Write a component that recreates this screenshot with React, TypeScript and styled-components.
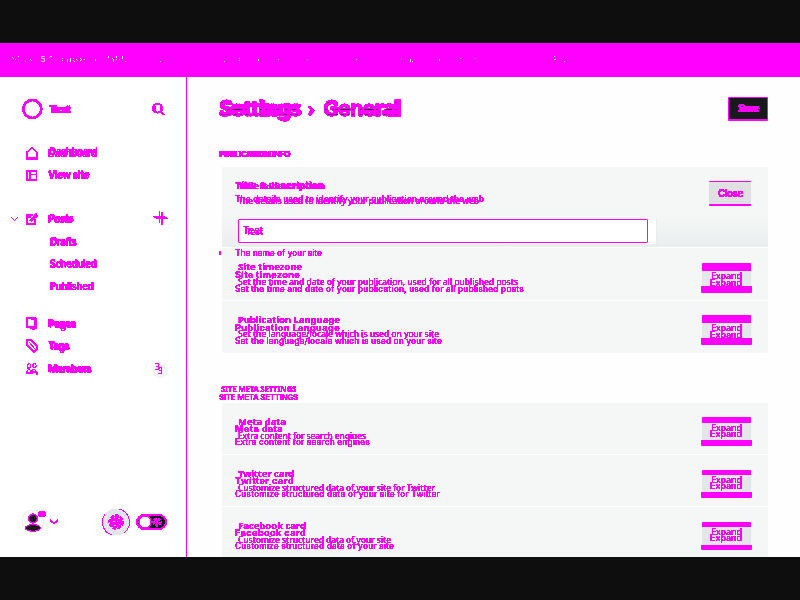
import React, { useLayoutEffect, useRef, useState } from "react";
import styled, { createGlobalStyle } from "styled-components";

const M = "#ff00ff";

const Global = createGlobalStyle`
  * { box-sizing: border-box; }
  body { margin: 0; background: #0e0e0e; font-family: "Noto Sans", sans-serif; }
`;
const Screen = styled.div`
  width: 800px; height: 600px; padding: 43px 0; overflow: hidden; background: #0e0e0e;
  display: flex; flex-direction: column;
`;
const Banner = styled.header`
  flex: 0 0 34px; background: ${M}; svg { display: block; }
`;
const Body = styled.div`
  height: 480px; display: flex; background: #fefefe; overflow: hidden;
`;
const Sidebar = styled.aside`
  width: 187px; flex: none; border-right: 1px solid ${M}; background: #fff;
  display: flex; flex-direction: column; padding-top: 20px;
`;
const Main = styled.main`
  flex: 1; padding: 0 32px 0 32px; display: flex; flex-direction: column;
`;
const Layers = styled.div<{ $w?: number; $h?: number }>`
  display: grid; grid-template-columns: ${(p) => p.$w ?? 290}px; align-items: start;
  height: ${(p) => p.$h ?? 10}px; filter: url(#crisp); flex: none;
`;
const Ink = styled.span<{ $x: number; $y: number; $size: number; $weight: number; $inter?: boolean }>`
  grid-area: 1 / 1; justify-self: start; white-space: pre; line-height: 10px; color: ${M};
  font-family: ${(p) => (p.$inter ? "Inter" : '"Noto Sans"')}, sans-serif;
  font-size: ${(p) => p.$size}px; font-weight: ${(p) => p.$weight};
  transform: translate(${(p) => p.$x}px, ${(p) => p.$y}px);
`;

type Layer = { x?: number; y?: number; w: number; size?: number; weight?: number; inter?: boolean };

function FittedText({ text, layer, hidden }: { text: string; layer: Layer; hidden?: boolean }) {
  const ref = useRef<HTMLSpanElement>(null);
  const [gap, setGap] = useState(0);
  useLayoutEffect(() => {
    if (ref.current) setGap((layer.w - ref.current.getBoundingClientRect().width) / text.length);
  }, []);
  return (
    <Ink ref={ref} aria-hidden={hidden} $x={layer.x ?? 0} $y={layer.y ?? 0} $size={layer.size ?? 8}
      $weight={layer.weight ?? 400} $inter={layer.inter} style={{ letterSpacing: gap }}>
      {text}
    </Ink>
  );
}
function Twin({ text, a, b, w, h }: { text: string; a: Layer; b?: Layer; w?: number; h?: number }) {
  return (
    <Layers $w={w} $h={h}>
      <FittedText text={text} layer={a} />
      {b && <FittedText text={text} layer={b} hidden />}
    </Layers>
  );
}

const Brand = styled.div`
  display: grid; grid-template-columns: 27px 102px 20px; align-items: center; height: 24px; padding-left: 22px;
`;
const NavRow = styled.div<{ $gap?: number }>`
  display: grid; grid-template-columns: 16px 22px 105px 20px; height: 22px; align-items: center;
  padding-left: 10px; margin-top: ${(p) => p.$gap ?? 0}px; flex: none;
`;
const Drawing = styled.svg.attrs({ fill: "none", stroke: M })`
  display: block; overflow: visible; shape-rendering: crispEdges;
`;
const Badge = styled.div`
  width: 15px; height: 15px; border-radius: 50%; background: #f3f4f5; margin-top: 4px;
`;
const Footer = styled.div`
  margin-top: auto; height: 70px; padding: 20px 0 0 21px; display: flex; align-items: flex-start;
`;
const Profile = styled.div` width: 81px; height: 30px; `;
const GearHolder = styled.div` width: 34px; height: 30px; `;

const TitleBar = styled.div`
  height: 63px; padding-top: 20px; display: flex; justify-content: space-between; flex: none;
`;
const Crumbs = styled.h1`
  margin: 0; display: grid; grid-template-columns: 88px 16px 90px; height: 24px; filter: url(#crisp);
`;
const CrumbText = styled.span<{ $col: number; $x: number; $y: number; $inter?: boolean; $weight: number; $gap: number }>`
  grid-row: 1; grid-column: ${(p) => p.$col}; justify-self: start; line-height: 24px; color: ${M}; white-space: pre;
  font-size: 21px; font-weight: ${(p) => p.$weight}; letter-spacing: ${(p) => p.$gap}px;
  -webkit-text-stroke: ${(p) => (p.$weight > 600 ? 0.5 : 0)}px ${M};
  font-family: ${(p) => (p.$inter ? "Inter" : '"Noto Sans"')}, sans-serif;
  transform: translate(${(p) => p.$x}px, ${(p) => p.$y}px);
`;
const CrumbCore = styled(CrumbText)`
  color: #2a0c2c;
  -webkit-text-stroke: 0;
  mask-image: linear-gradient(transparent 6px, #000 6px 7px, transparent 7px 13px, #000 13px 14px, transparent 14px 18px, #000 18px 19px, transparent 19px);
`;
const SaveButton = styled.button`
  width: 40px; height: 24px; border: 1px solid ${M}; border-bottom-width: 2px; border-radius: 1px;
  background: #17191c; padding: 6px 0 0 9px; display: flex; align-items: flex-start;
`;
const CloseButton = styled.button`
  width: 42px; height: 25px; border: solid ${M}; border-width: 1px 0 2px; border-radius: 1px; background: #dfe0e2;
  padding: 6px 0 0 9px; margin-right: 17px; text-align: left; flex: none; display: flex; align-items: flex-start;
`;
const SectionTitle = styled.div<{ $h: number; $top: number }>`
  height: ${(p) => p.$h}px; padding-top: ${(p) => p.$top}px; flex: none;
`;
const Panel = styled.section`
  width: 546px; margin-left: 3px; background: #f5f7f7; flex: none; border-radius: 2px;
`;
const OpenCard = styled.div`
  height: 81px; border-bottom: 1px solid #fff; background: linear-gradient(#f5f7f7 60%, #ebeeee);
`;
const OpenHead = styled.div`
  display: flex; justify-content: space-between; height: 52px; padding: 14px 0 0 13px;
`;
const InputTrack = styled.div`
  width: 419px; height: 25px; margin-left: 16px; background: #fff; border-right: 1px solid #e9ecec;
`;
const InputBox = styled.div`
  width: 410px; height: 24px; border: 1px solid ${M}; border-radius: 1px; background: #fff; padding: 6px 0 0 4px;
`;
const Row = styled.div<{ $h: number; $line?: boolean }>`
  height: ${(p) => p.$h}px; padding: 0 16px 0 13px; display: flex; justify-content: space-between;
  border-bottom: ${(p) => (p.$line ? 1 : 0)}px solid #fff;
`;
const RowCopy = styled.div<{ $top: number }>`
  padding-top: ${(p) => p.$top}px; display: flex; flex-direction: column;
`;
const HintLine = styled.div`
  display: flex; margin-left: -16px; align-items: flex-start;
`;
const HintMark = styled.i`
  width: 2px; height: 4px; margin: 3px 14px 0 0; background: ${M};
`;
const Expand = styled.button<{ $mt: number; $t: number; $mid: number; $b: number }>`
  margin: ${(p) => p.$mt}px 0 0; padding: 0; border: 0; background: none; width: 51px; flex: none;
  display: grid; grid-template-rows: ${(p) => p.$t}px ${(p) => p.$mid}px ${(p) => p.$b}px; align-self: flex-start;
`;
const Band = styled.span<{ $inset?: boolean }>`
  background: ${M}; margin: 0 ${(p) => (p.$inset ? 1 : 0)}px; border-radius: ${(p) => (p.$inset ? "1px 1px 0 0" : "0 0 1px 1px")};
`;
const Face = styled.span`
  background: #e3e7ea; margin: 0 1px; padding-left: 8px; text-align: left;
`;

function ExpandButton({ size, gap }: { size: [number, number, number, number]; gap: number }) {
  return (
    <Expand $mt={size[0]} $t={size[1]} $mid={size[2]} $b={size[3]}>
      <Band $inset />
      <Face>
        <Twin text="Expand" w={35} a={{ x: 1, y: -0.3, w: 31, size: 9, weight: 550 }} b={{ y: gap - 2, w: 32, size: 9, weight: 550, inter: true }} />
      </Face>
      <Band />
    </Expand>
  );
}

function Setting({ title, text, h, line, tw, dw, btn, top, gap = 9 }: {
  title: string; text: string; h: number; line?: boolean;
  tw: [number, number]; dw: [number, number]; btn: [number, number, number, number]; top: number; gap?: number;
}) {
  return (
    <Row $h={h} $line={line}>
      <RowCopy $top={top}>
        <Twin text={title} h={14} a={{ x: 3, y: -0.3, w: tw[0], size: 9.5, weight: 700 }} b={{ y: gap - 1, w: tw[1], size: 9.1, weight: 700, inter: true }} />
        <Twin text={text} a={{ x: 3, w: dw[0], size: 8.5, weight: 500 }} b={{ y: gap - 1.8, w: dw[1], size: 8.4, weight: 500, inter: true }} />
      </RowCopy>
      <ExpandButton size={btn} gap={gap} />
    </Row>
  );
}

const icons: Record<string, React.ReactNode> = {
  Dashboard: <><path d="M1 11V5l5-4 5 4v6" strokeWidth="1.4" /><path d="M0 11h11.5" strokeWidth="3" /></>,
  "View site": <path d="M1 2h9.5v9H1zM0 1.5h11M4 2v9M5 5.5h6" strokeWidth="1.8" />,
  Posts: <><path d="M7 2H1v9h8V6M1 4h4" strokeWidth="2" /><path d="m4 8 6-7 1 2-6 5" /></>,
  Pages: <><path d="M1 1h8v9H1z" strokeWidth="2" /><path d="M5 2h5v9l-3 1.5-5-3" strokeWidth="1.5" /></>,
  Tags: <><path d="M1 1h4l6 6v3l-3 3-7-7z" strokeWidth="2" /><path d="m3 3 6 7" strokeWidth="1" /></>,
  Members: <path d="M1.5 3 3 1l2 2-1 3H2zM7 2l2-1 1.5 3L9 6 7 5zM1 12V9l2-2 2 2v3M6 12V8l2-1 3 3v3M0 11h4M7 10h3" strokeWidth="1.2" />,
};
const Nav = ({ name, w, gap, dy, start, end }: { name: string; w: number; gap?: number; dy: number; start?: React.ReactNode; end?: React.ReactNode }) => (
  <NavRow $gap={gap}>
    <span>{start}</span>
    <Drawing width="12" height="13" strokeWidth="1.7">{icons[name]}</Drawing>
    <Twin text={name} w={100} a={{ w: w - 0.5, y: 0, size: 10, weight: 600, inter: true }} b={{ x: 1, y: dy, w: w - 0.5, size: 9.8, weight: 600 }} />
    <span>{end}</span>
  </NavRow>
);
const Child = ({ name, w, dy }: { name: string; w: number; dy: number }) => (
  <NavRow>
    <span /><span />
    <Twin text={name} w={100} a={{ x: 1.5, w, y: 0.5, size: 10, weight: 550, inter: true }} b={{ x: 2.3, y: dy, w: w - 1, size: 9.8, weight: 550 }} />
  </NavRow>
);

const dots = [[12,57],[13,58],[15,59],[18,56],[25,61],[30,59],[31,60],[49,57],[50,56],[51,56],[62,58],[62,60],[67,59],[67,60],[67,61],[70,58],[70,59],[70,60],[70,61],[73,58],[73,60],[74,61],[76,59],[77,60],[80,58],[80,60],[81,59],[84,59],[95,59],[95,60],[108,56],[108,57],[112,58],[113,59],[113,60],[113,61],[116,56],[116,57],[116,59],[119,59],[122,56],[122,57],[122,58],[125,61],[160,61],[224,61],[239,58],[239,60],[258,59],[258,60],[278,59],[307,59],[356,59],[401,58],[410,59],[410,60],[410,61],[412,61],[439,59],[439,60],[460,58],[475,58],[554,56],[554,59],[555,59],[564,61]];

export default function App() {
  return (
    <>
      <Global />
      <Screen>
        <Banner>
          <svg width="800" height="34" shapeRendering="crispEdges">
            <defs>
              <filter id="crisp" x="-10%" y="-50%" width="120%" height="250%">
                <feComponentTransfer><feFuncA type="linear" slope="14" intercept="-2" /></feComponentTransfer>
              </filter>
            </defs>
            {dots.map(([x, y], i) => <rect key={i} x={x} y={y - 43} width="1" height="1" fill="#fff" />)}
            <text x="40.5" y="19" fill="#fff" fontFamily="Inter" fontSize="8">5</text>
          </svg>
        </Banner>
        <Body>
          <Sidebar>
            <Brand>
              <Drawing width="20" height="20"><circle cx="10.3" cy="10" r="9" strokeWidth="2.8" /></Drawing>
              <Twin text="Test" w={60} a={{ w: 21, size: 10, y: -0.5, weight: 700 }} b={{ x: 1.5, y: 0, w: 21, size: 10, weight: 700, inter: true }} />
              <Drawing width="16" height="15" strokeWidth="1.6"><ellipse cx="6.5" cy="6.2" rx="4.8" ry="4.4" strokeWidth="2" /><path d="M4 4v5M10 4v6M10 10l3 3M11 12.5h3" /></Drawing>
            </Brand>
            <Nav name="Dashboard" w={49} gap={21} dy={-0.6} />
            <Nav name="View site" w={41} dy={-0.4} />
            <Nav name="Posts" w={25} gap={22} dy={-0.5}
              start={<Drawing width="10" height="8" strokeWidth="1.2"><path d="m1 2 3.5 3.5L8 2" /></Drawing>}
              end={<Drawing width="16" height="16" strokeWidth="1.4"><path d="M6.5 0v12M9 1v13M0 5.5h12M3 7.5h12" /><path d="M1 6.5h13" /></Drawing>} />
            <Child name="Drafts" w={27} dy={1.2} />
            <Child name="Scheduled" w={47} dy={1.2} />
            <Child name="Published" w={44} dy={2} />
            <Nav name="Pages" w={28} gap={16} dy={2} />
            <Nav name="Tags" w={21} dy={2} />
            <Nav name="Members" w={43} gap={1} dy={2.3}
              end={<Badge><Twin text="3" w={10} a={{ x: 2, y: -1, w: 5, size: 8.5, weight: 500 }} b={{ x: 5, y: 3, w: 5, size: 8, weight: 500 }} /></Badge>} />
            <Footer>
              <Profile>
                <Drawing width="42" height="30">
                  <circle cx="12" cy="14" r="11" stroke="#f0f0f0" />
                  <circle cx="12" cy="11.5" r="4.4" fill="#17191c" strokeWidth="1.5" />
                  <ellipse cx="12" cy="21" rx="7.5" ry="3.3" fill="#17191c" strokeWidth="1.2" />
                  <ellipse cx="21" cy="7" rx="4" ry="3.5" fill={M} stroke="none" />
                  <path d="m29 13 4 3.5 4-3.5" strokeWidth="1.9" />
                </Drawing>
              </Profile>
              <GearHolder>
                <Drawing width="28" height="28">
                  <circle cx="14" cy="15" r="13.5" fill="#e3e6e9" stroke="none" />
                  <path d="M17 2a13.5 13.5 0 0 1 5 24M10 28A13.5 13.5 0 0 1 3 7" />
                  <circle cx="14" cy="15" r="6.3" fill={M} strokeWidth="3" strokeDasharray="3.5 1.2" />
                  <path d="M12 10h1M16 11h2M11 14h2M15 14h1M17 17h1M12 18h2M15 20h1" stroke="#e3e6e9" />
                </Drawing>
              </GearHolder>
              <Drawing width="31" height="28">
                <rect x="1" y="8" width="29" height="14" rx="7" fill="#17191c" strokeWidth="2" />
                <circle cx="9" cy="15" r="6" fill="#fff" strokeWidth="1.5" />
                <circle cx="21" cy="15" r="3" strokeWidth="3.4" strokeDasharray="2.6 1" />
                <circle cx="21" cy="15" r="1" fill={M} stroke="none" />
              </Drawing>
            </Footer>
          </Sidebar>
          <Main>
            <TitleBar>
              <Crumbs>
                <CrumbText $col={1} $x={0} $y={-1} $weight={700} $gap={-0.45}>Settings</CrumbText>
                <CrumbText aria-hidden $col={1} $x={0.5} $y={0} $weight={700} $gap={-0.55} $inter>Settings</CrumbText>
                <CrumbCore aria-hidden $col={1} $x={0.7} $y={-1} $weight={300} $gap={0.3}>Settings</CrumbCore>
                <CrumbText $col={2} $x={0} $y={-1} $weight={400} $gap={0}>›</CrumbText>
                <CrumbText aria-hidden $col={2} $x={1} $y={1} $weight={300} $gap={0} $inter>›</CrumbText>
                <CrumbText $col={3} $x={0} $y={-1} $weight={700} $gap={-0.4}>General</CrumbText>
                <CrumbText aria-hidden $col={3} $x={0.5} $y={0} $weight={700} $gap={-0.75} $inter>General</CrumbText>
                <CrumbCore aria-hidden $col={3} $x={1} $y={-1} $weight={300} $gap={-0.1}>General</CrumbCore>
              </Crumbs>
              <SaveButton><Twin text="Save" w={28} a={{ w: 20, size: 9.7, weight: 700 }} b={{ x: 1, y: 0, w: 20, size: 9.7, weight: 700, inter: true }} /></SaveButton>
            </TitleBar>
            <SectionTitle $h={27} $top={9}>
              <Twin text="PUBLICATION INFO" a={{ w: 71, y: 0, size: 8, weight: 700 }} b={{ x: 0.5, y: 0.3, w: 71, size: 8, weight: 650, inter: true }} />
            </SectionTitle>
            <Panel>
              <OpenCard>
                <OpenHead>
                  <div>
                    <Twin text="Title & description" h={13} a={{ x: 3, w: 87, size: 9.6, weight: 700 }} b={{ w: 89, size: 9.3, weight: 700, inter: true }} />
                    <Twin text="The details used to identify your publication around the web" a={{ w: 249, size: 8.4, weight: 500, inter: true }} b={{ x: 3, y: 2, w: 241, size: 8.6, weight: 500 }} />
                  </div>
                  <CloseButton><Twin text="Close" w={28} a={{ w: 25, size: 9.9, weight: 600 }} b={{ y: 0.7, w: 25, size: 9.7, weight: 600, inter: true }} /></CloseButton>
                </OpenHead>
                <InputTrack><InputBox><Twin text="Test" a={{ x: 0, y: 0, w: 20, size: 9.7, weight: 500, inter: true }} b={{ x: 3, y: 1.3, w: 17, size: 9.2, weight: 500 }} /></InputBox></InputTrack>
              </OpenCard>
              <Row $h={53} $line>
                <RowCopy $top={0}>
                  <HintLine>
                    <HintMark />
                    <Twin text="The name of your site" h={14} a={{ w: 87, y: -0.4, size: 8.4, weight: 500, inter: true }} />
                  </HintLine>
                  <Twin text="Site timezone" h={15} a={{ x: 3, y: 0.3, w: 64, size: 9.5, weight: 700 }} b={{ y: 8.4, w: 65, size: 9.1, weight: 700, inter: true }} />
                  <Twin text="Set the time and date of your publication, used for all published posts" a={{ x: 3, y: 0, w: 280, size: 8.5, weight: 500 }} b={{ y: 7.3, w: 289, size: 8.4, weight: 500, inter: true }} />
                </RowCopy>
                <ExpandButton size={[15, 8, 15, 7]} gap={9} />
              </Row>
              <Setting title="Publication Language" text="Set the language/locale which is used on your site" h={52} top={14} tw={[102, 105]} dw={[201, 207]} btn={[14, 8, 15, 7]} />
            </Panel>
            <SectionTitle $h={50} $top={31}>
              <Twin text="SITE META SETTINGS" a={{ x: 2, y: -0.5, w: 75, size: 8, weight: 700 }} b={{ y: 8, w: 79, size: 7.9, weight: 600, inter: true }} />
            </SectionTitle>
            <Panel>
              <Setting title="Meta data" text="Extra content for search engines" h={52} line top={14} gap={8} tw={[48, 48]} dw={[128, 135]} btn={[14, 6, 17, 6]} />
              <Setting title="Twitter card" text="Customize structured data of your site for Twitter" h={52} line top={14} gap={7.5} tw={[56, 59]} dw={[197, 205]} btn={[15, 5, 17, 6]} />
              <Setting title="Facebook card" text="Customize structured data of your site" h={53} top={14} gap={7.5} tw={[68, 71]} dw={[153, 159]} btn={[15, 5, 18, 5]} />
            </Panel>
          </Main>
        </Body>
      </Screen>
    </>
  );
}
